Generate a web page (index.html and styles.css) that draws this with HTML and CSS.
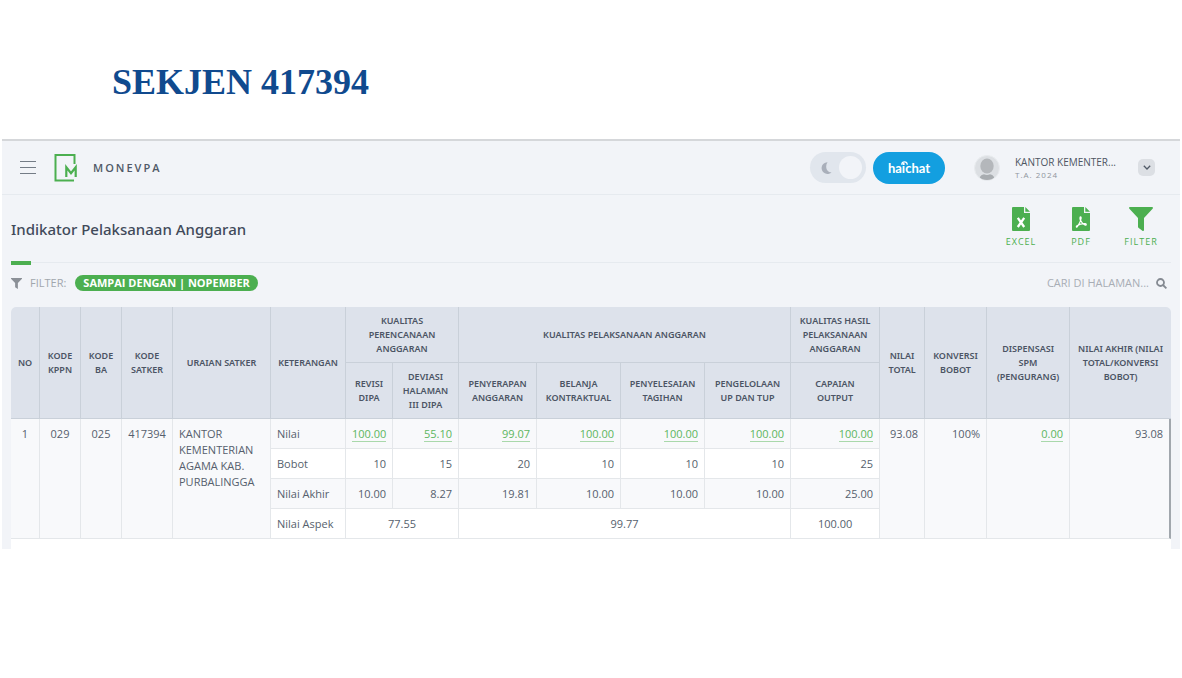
FILE: index.html
```html
<!DOCTYPE html>
<html lang="id">
<head>
<meta charset="utf-8">
<meta name="viewport" content="width=device-width, initial-scale=1">
<title>Indikator Pelaksanaan Anggaran</title>
<link rel="stylesheet" href="styles.css">
</head>
<body>
<h1 class="slide-title">SEKJEN 417394</h1>
<div class="app">
  <header class="topbar">
    <button class="menu" aria-label="Menu"><svg width="16" height="13" viewBox="0 0 16 13"><path d="M0 .5h16M0 6.500h16M0 12.500h16" stroke="#747c86" stroke-width="1.200"/></svg></button>
    <a class="brand" href="#">
      <svg width="24" height="29" viewBox="0 0 24 29" fill="none" stroke="#4caf50"><path d="M20.500 11V2H1.500v25.500h18.500" stroke-width="2"/><path d="M12.300 24V14.300l4.700 6 4.700-6V24" stroke-width="2.200"/></svg>
      <span>MONEVPA</span>
    </a>
    <label class="toggle"><input type="checkbox" aria-label="Mode gelap"><svg width="12" height="12" viewBox="0 0 12 12"><path d="M7.500.3a5.800 5.800 0 1 0 4 9.900C7 10.800 4.500 4.500 7.500.3z" fill="#a9afba"/></svg><i class="knob"></i></label>
    <button class="chat">ha<span class="chat-i">i<svg width="7" height="4" viewBox="0 0 7 4"><path d="M.7 3.700C1 0 6 0 6.300 3.700" fill="none" stroke="#fff" stroke-width="1.200"/></svg></span>chat</button>
    <svg class="avatar" width="26" height="26" viewBox="0 0 26 26"><defs><clipPath id="face"><circle cx="13" cy="13" r="12"/></clipPath></defs><circle cx="13" cy="13" r="12.500" fill="#dcdfe3" stroke="#e8ebee"/><g clip-path="url(#face)" fill="#b4b7bb"><ellipse cx="13" cy="11" rx="6.700" ry="7.500"/><path d="M5 26c0-5 3-6.500 5-6.800q3 1.500 6 0c2 .3 5 1.800 5 6.800z" fill="#a8acb0"/></g></svg>
    <div class="user"><span class="user-name">KANTOR KEMENTER...</span><span class="user-year">T.A. 2024</span></div>
    <button class="more" aria-label="Akun"><svg width="8" height="5" viewBox="0 0 8 5"><path d="M.8.8 4 4 7.200.8" fill="none" stroke="#505966" stroke-width="1.300"/></svg></button>
  </header>
  <main class="content">
    <div class="heading">
      <h2>Indikator Pelaksanaan Anggaran</h2>
      <div class="actions">
        <button><svg width="18" height="24" viewBox="0 0 18 24"><path d="M1 0h11v6h6v17a1 1 0 0 1-1 1H1a1 1 0 0 1-1-1V1a1 1 0 0 1 1-1zM13.300 0 18 4.700h-4.700z" fill="#4caf50"/><path d="m5.800 10.800 6.400 9.200M12.200 10.800 5.800 20" stroke="#fff" stroke-width="2.300"/></svg>EXCEL</button>
        <button><svg width="18" height="24" viewBox="0 0 18 24"><path d="M1 0h11v6h6v17a1 1 0 0 1-1 1H1a1 1 0 0 1-1-1V1a1 1 0 0 1 1-1zM13.300 0 18 4.700h-4.700z" fill="#4caf50"/><path d="M8.500 9.800c-.8.200-.6 2.200 0 3.500 1 2.300 2.700 4 4.800 4.800 1.200.4 1.400-1.300 0-1.400-3-.2-6 .6-8.300 2.100-1.300 1-.4 2 .5.700 1.700-2.400 3.200-5.300 3.600-8 .1-1-.1-1.800-.6-1.700z" fill="none" stroke="#fff" stroke-width="1.200"/></svg>PDF</button>
        <button><svg width="24" height="24" viewBox="0 0 24 24"><path d="M1 0h22c1 0 1.300 1 .6 1.700L15 11v12c0 .9-.9 1.200-1.600.7l-3.700-2.600c-.4-.3-.7-.7-.7-1.300V11L.4 1.700C-.3 1 0 0 1 0z" fill="#4caf50"/></svg>FILTER</button>
      </div>
    </div>
    <div class="filterbar">
      <svg width="11" height="11" viewBox="0 0 24 24"><path d="M0 0h24v1.500L15 11v13l-6-4V11L0 1.500z" fill="#8b9097"/></svg>
      <span class="filter-label">FILTER:</span>
      <span class="chip">SAMPAI DENGAN | NOPEMBER</span>
      <label class="search"><input type="text" placeholder="CARI DI HALAMAN..." aria-label="Cari di halaman"><svg width="11" height="11" viewBox="0 0 11 11" fill="none" stroke="#858a92" stroke-width="1.800"><circle cx="4.500" cy="4.500" r="3.500"/><path d="m7 7 3.400 3.400"/></svg></label>
    </div>
    <div class="panel">
    <table>
      <colgroup><col class="w29"><col class="w41"><col class="w41"><col class="w51"><col class="w98"><col class="w75"><col class="w47"><col class="w66"><col class="w78"><col class="w84"><col class="w84"><col class="w86"><col class="w89"><col class="w45"><col class="w62"><col class="w83"><col class="w101"></colgroup>
      <thead>
        <tr><th rowspan="2">NO</th><th rowspan="2">KODE<br>KPPN</th><th rowspan="2">KODE<br>BA</th><th rowspan="2">KODE<br>SATKER</th><th rowspan="2">URAIAN SATKER</th><th rowspan="2">KETERANGAN</th><th colspan="2">KUALITAS<br>PERENCANAAN<br>ANGGARAN</th><th colspan="4">KUALITAS PELAKSANAAN ANGGARAN</th><th>KUALITAS HASIL<br>PELAKSANAAN<br>ANGGARAN</th><th rowspan="2">NILAI<br>TOTAL</th><th rowspan="2">KONVERSI<br>BOBOT</th><th rowspan="2">DISPENSASI<br>SPM<br>(PENGURANG)</th><th rowspan="2">NILAI AKHIR (NILAI<br>TOTAL/KONVERSI<br>BOBOT)</th></tr>
        <tr><th>REVISI<br>DIPA</th><th>DEVIASI<br>HALAMAN<br>III DIPA</th><th>PENYERAPAN<br>ANGGARAN</th><th>BELANJA<br>KONTRAKTUAL</th><th>PENYELESAIAN<br>TAGIHAN</th><th>PENGELOLAAN<br>UP DAN TUP</th><th>CAPAIAN<br>OUTPUT</th></tr>
      </thead>
      <tbody>
        <tr class="tint"><td rowspan="4" class="mid">1</td><td rowspan="4" class="mid">029</td><td rowspan="4" class="mid">025</td><td rowspan="4" class="mid">417394</td><td rowspan="4" class="name">KANTOR KEMENTERIAN AGAMA KAB. PURBALINGGA</td><td>Nilai</td><td class="num"><a href="#">100.00</a></td><td class="num"><a href="#">55.10</a></td><td class="num"><a href="#">99.07</a></td><td class="num"><a href="#">100.00</a></td><td class="num"><a href="#">100.00</a></td><td class="num"><a href="#">100.00</a></td><td class="num"><a href="#">100.00</a></td><td rowspan="4" class="num">93.08</td><td rowspan="4" class="num">100%</td><td rowspan="4" class="num"><a href="#">0.00</a></td><td rowspan="4" class="num last">93.08</td></tr>
        <tr><td>Bobot</td><td class="num">10</td><td class="num">15</td><td class="num">20</td><td class="num">10</td><td class="num">10</td><td class="num">10</td><td class="num">25</td></tr>
        <tr class="tint"><td>Nilai Akhir</td><td class="num">10.00</td><td class="num">8.27</td><td class="num">19.81</td><td class="num">10.00</td><td class="num">10.00</td><td class="num">10.00</td><td class="num">25.00</td></tr>
        <tr><td>Nilai Aspek</td><td colspan="2" class="mid">77.55</td><td colspan="4" class="mid">99.77</td><td class="mid">100.00</td></tr>
      </tbody>
    </table>
    </div>
  </main>
</div>
</body>
</html>
```
FILE: styles.css
```css
* { box-sizing: border-box; }
body { margin: 0; background: #fff; font-family: "Open Sans", "Noto Sans", sans-serif; color: #565f6d; }
button { border: 0; padding: 0; background: none; font: inherit; color: inherit; cursor: pointer; }
a { color: inherit; text-decoration: none; }
svg { display: block; flex: none; }
.slide-title { margin: 0; padding: 62px 112px 36px; font: bold 36px/41px "Liberation Serif", serif; color: #104a8e; }
.app { margin: 0 2px; background: #f2f4f8; border-top: 2px solid #d5d7da; }
.topbar { display: flex; align-items: center; height: 54px; padding: 0 25px 0 18px; border-bottom: 1px solid #e6eaef; }
.menu { margin-right: 18px; }
.brand { display: flex; align-items: center; gap: 15px; margin-right: auto; font-size: 11px; font-weight: 600; letter-spacing: 2px; color: #505967; }
.toggle { position: relative; display: flex; align-items: center; justify-content: space-between; width: 56px; height: 31px; padding: 0 4px 0 10px; margin-right: 7px; border-radius: 16px; background: #e1e6ed; }
.toggle input { position: absolute; inset: 0; width: 100%; height: 100%; margin: 0; opacity: 0; }
.knob { width: 23px; height: 23px; border-radius: 50%; background: #f2f4f8; }
.chat { width: 72px; height: 32px; margin-right: 29px; border-radius: 16px; background: #139fe0; color: #fff; font: bold 13px/16px Lato, sans-serif; }
.chat-i { position: relative; }
.chat-i svg { position: absolute; left: -1px; top: 1px; }
.avatar { margin-right: 15px; }
.user { display: flex; flex-direction: column; width: 123px; }
.user-name { font-size: 10px; line-height: 13px; color: #4e5663; }
.user-year { font-size: 8px; line-height: 11px; letter-spacing: 1px; color: #8f959e; }
.more { display: grid; place-items: center; width: 17px; height: 17px; border-radius: 5px; background: #dcdfe4; }
.content { padding: 0 9px; }
.heading { position: relative; display: flex; align-items: center; justify-content: space-between; height: 68px; border-bottom: 1px solid #e6eaef; }
.heading::after { content: ""; position: absolute; left: 0; bottom: -3px; width: 20px; height: 4px; background: #4caf50; }
h2 { margin: 0; font: 500 15px/24px "Noto Sans", "Open Sans", sans-serif; color: #414a5a; }
.actions { display: flex; padding-bottom: 2px; }
.actions button { display: flex; flex-direction: column; align-items: center; gap: 4px; width: 60px; font-size: 9px; line-height: 13px; letter-spacing: 1px; color: #4caf50; }
.filterbar { display: flex; align-items: center; height: 44px; padding: 0 4px 4px 0; }
.filter-label { margin: 0 9px 0 8px; font-size: 11px; line-height: 16px; color: #a1a6ad; }
.chip { padding: 0 8px; border-radius: 8px; background: #4caf50; color: #fff; font-size: 11px; font-weight: 700; line-height: 16px; }
.search { display: flex; align-items: center; gap: 7px; margin-left: auto; }
.search input { width: 140px; padding: 0; border: 0; outline: 0; background: none; font: 11px/16px "Open Sans", sans-serif; text-align: right; color: #565f6d; }
.search input::placeholder { color: #a8adb5; opacity: 1; }
.panel { padding-bottom: 10px; background: #fff; border-radius: 5px 5px 0 0; overflow: hidden; }
table { width: 100%; table-layout: fixed; border-collapse: separate; border-spacing: 0; font-size: 11px; line-height: 16px; }
.w29 { width: 29px; } .w41 { width: 41px; } .w51 { width: 51px; } .w98 { width: 98px; }
.w75 { width: 75px; } .w47 { width: 47px; } .w66 { width: 66px; } .w78 { width: 78px; }
.w84 { width: 84px; } .w86 { width: 86px; } .w89 { width: 89px; } .w45 { width: 45px; }
.w62 { width: 62px; } .w83 { width: 83px; } .w101 { width: 101px; }
th { height: 56px; padding: 0; border-right: 1px solid #c9d0d9; border-bottom: 1px solid #c9d0d9; background: #dde2eb; color: #4b5464; font: 600 9px/14px "Noto Sans", "Open Sans", sans-serif; white-space: nowrap; }
td { padding: 7px 6px 6px; border-right: 1px solid #e4e7ea; border-bottom: 1px solid #e4e7ea; vertical-align: top; white-space: nowrap; }
.tint td { background: #f8f9fb; }
.mid { text-align: center; }
.num { text-align: right; }
td.name { white-space: normal; }
td.last { border-right: 2px solid #a1a7ad; }
th:last-child[rowspan] { border-right: 0; }
td a { display: block; width: fit-content; height: 16px; margin-left: auto; border-bottom: 1px solid #a9d8ab; color: #5cb660; }
```
